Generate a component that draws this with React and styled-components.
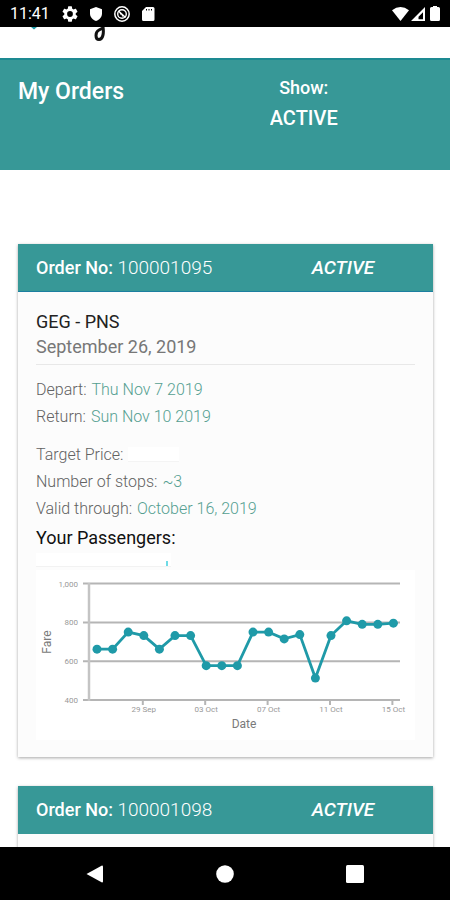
import React from "react";
import styled, { createGlobalStyle } from "styled-components";

const TEAL = "#379897";
const SERIES = "#1f9aa8";

const GlobalStyle = createGlobalStyle`
  *, *::before, *::after { box-sizing: border-box; }
  body {
    margin: 0;
    background: #fff;
    font-family: Roboto, "Liberation Sans", sans-serif;
  }
  h1, h2, h3, p, dl, dd, dt { margin: 0; font-weight: inherit; }
`;

const Screen = styled.div`
  display: flex;
  flex-direction: column;
  height: 100vh;
  overflow: hidden;
  background: #fff;
`;

const StatusBar = styled.div`
  flex: none;
  display: flex;
  align-items: center;
  justify-content: space-between;
  height: 27px;
  padding: 0 8px 0 10px;
  background: #000;
  color: #fff;
`;

const StatusGroup = styled.div`
  display: flex;
  align-items: center;
  gap: ${(p) => p.$gap};
`;

const Clock = styled.time`
  margin-right: 2px;
  font-size: 16px;
  line-height: 27px;
`;

const StatusIcon = styled.svg`
  display: block;
  width: ${(p) => p.$size || "16px"};
  height: 16px;
  fill: #fff;
`;

const Content = styled.main`
  flex: 1;
  min-height: 0;
  overflow: hidden;
`;

const BrandStrip = styled.div`
  height: 31px;
  padding-left: 30px;
`;

const BrandMark = styled.svg`
  display: block;
  width: 80px;
  height: 16px;
`;

const PageHeader = styled.header`
  display: grid;
  grid-template-columns: 35% 65%;
  height: 112px;
  padding-top: 17px;
  border-top: 2px solid #1d8a92;
  background: ${TEAL};
  color: #fff;
`;

const PageTitle = styled.h1`
  padding-left: 18px;
  font-size: 23px;
  font-weight: 500;
  line-height: 30px;
`;

const Filter = styled.label`
  display: flex;
  flex-direction: column;
  align-items: center;
  font-size: 18px;
  font-weight: 500;
  line-height: 22px;
`;

const FilterSelect = styled.select`
  appearance: none;
  margin-top: 6px;
  padding: 0;
  border: 0;
  background: transparent;
  color: #fff;
  font: 500 20px/26px Roboto, "Liberation Sans", sans-serif;
`;

const OrderList = styled.section`
  display: flex;
  flex-direction: column;
  gap: 29px;
  padding: 74px 17px 0 18px;
`;

const Card = styled.article`
  background: #fcfcfc;
  box-shadow: 0 1px 3px rgba(0, 0, 0, 0.35);
`;

const CardHeader = styled.header`
  display: grid;
  grid-template-columns: 62% 38%;
  align-items: center;
  height: 48px;
  padding: 0 18px;
  border-bottom: 1px solid ${(p) => (p.$open ? "#1c7fa0" : TEAL)};
  background: ${TEAL};
  color: #fff;
  line-height: 24px;
`;

const OrderNumber = styled.h2`
  font-size: 18px;
  font-weight: 500;
  white-space: nowrap;

  span {
    font-size: 19px;
    font-weight: 300;
  }
`;

const Status = styled.em`
  text-align: center;
  font-size: 19px;
  font-weight: 500;
`;

const CardBody = styled.div`
  min-height: 64px;
  padding: 17px 18px;
`;

const Route = styled.h3`
  color: #222;
  font-size: 18px;
  line-height: 25px;
`;

const OrderDate = styled.p`
  padding-bottom: 5px;
  border-bottom: 1px solid #e8e8e8;
  color: #777;
  font-size: 18px;
  font-weight: 400;
  line-height: 25px;
`;

const Details = styled.dl`
  margin-top: 11px;
  font-size: 16px;
  font-weight: 300;
  line-height: 27px;
`;

const Detail = styled.div`
  display: flex;
  align-items: center;
  gap: 5px;

  dt { color: #626262; }
  dd { color: #559f91; }
`;

const HiddenPrice = styled.dd`
  width: 51px;
  height: 15px;
  border-bottom: 1px solid #f4f4f4;
  background: #fff;
`;

const PassengersTitle = styled.h3`
  color: #111;
  font-size: 18px;
  line-height: 31px;
`;

const HiddenPassenger = styled.div`
  display: flex;
  align-items: flex-end;
  justify-content: flex-end;
  width: 135px;
  height: 14px;
  margin-bottom: 3px;
  padding-right: 3px;
  border-bottom: 1px solid #f2f2f2;
  background: #fff;

  &::after {
    content: "";
    width: 2px;
    height: 5px;
    background: #6fdbe6;
  }
`;

const ChartFrame = styled.svg`
  display: block;
  width: 100%;
  height: auto;
  background: #fff;
  font-family: Roboto, "Liberation Sans", sans-serif;
`;

const AxisLabel = styled.text`
  fill: #999;
  font-size: 8px;
  text-anchor: ${(p) => p.$anchor};
`;

const AxisTitle = styled.text`
  fill: #7a7a7a;
  font-size: 12px;
  text-anchor: middle;
`;

const NavBar = styled.nav`
  flex: none;
  display: grid;
  grid-template-columns: repeat(3, 130px);
  justify-content: center;
  height: 53px;
  background: #000;
`;

const NavButton = styled.button`
  display: flex;
  align-items: center;
  justify-content: center;
  padding: 0;
  border: 0;
  background: transparent;

  svg {
    width: 20px;
    height: 20px;
    fill: #fff;
  }
`;

const FARES = [662, 662, 750, 732, 662, 732, 732, 577, 577, 577, 750, 750, 715, 737, 513, 732, 808, 790, 790, 796];
const FARE_TICKS = [[1000, "1,000"], [800, "800"], [600, "600"], [400, "400"]];
const DATE_TICKS = [[3, "29 Sep"], [7, "03 Oct"], [11, "07 Oct"], [15, "11 Oct"], [19, "15 Oct"]];

const xAt = (i) => 61 + i * 15.6;
const yAt = (fare) => 130 - (fare - 400) * 0.194;

function FareChart() {
  const points = FARES.map((fare, i) => [xAt(i), yAt(fare)]);
  return (
    <ChartFrame viewBox="0 0 379 170" role="img" aria-label="Fare by date">
      {FARE_TICKS.map(([fare, label]) => (
        <g key={fare}>
          <line x1="47" x2="364" y1={yAt(fare)} y2={yAt(fare)} stroke="#b5b5b5" strokeWidth="2" />
          <AxisLabel $anchor="end" x="42" y={yAt(fare) + 3}>{label}</AxisLabel>
        </g>
      ))}
      <line x1="53" x2="53" y1="13" y2="131" stroke="#c4c4c4" strokeWidth="2.5" />
      {DATE_TICKS.map(([i, label]) => (
        <g key={label}>
          <line x1={xAt(i) - 1} x2={xAt(i) - 1} y1="130" y2="135" stroke="#b5b5b5" strokeWidth="2" />
          <AxisLabel $anchor="middle" x={xAt(i)} y="142">{label}</AxisLabel>
        </g>
      ))}
      <polyline points={points.map((p) => p.join(",")).join(" ")} fill="none" stroke={SERIES} strokeWidth="2.8" />
      {points.map(([x, y]) => (
        <circle key={x} cx={x} cy={y} r="4.5" fill={SERIES} />
      ))}
      <AxisTitle x="208" y="158">Date</AxisTitle>
      <AxisTitle transform="translate(15 72) rotate(-90)">Fare</AxisTitle>
    </ChartFrame>
  );
}

function OrderCard({ number, status, children }) {
  return (
    <Card>
      <CardHeader $open={Boolean(children)}>
        <OrderNumber>Order No: <span>{number}</span></OrderNumber>
        <Status>{status}</Status>
      </CardHeader>
      <CardBody>{children}</CardBody>
    </Card>
  );
}

export default function App() {
  return (
    <>
      <GlobalStyle />
      <Screen>
        <StatusBar>
          <StatusGroup $gap="10px">
            <Clock>11:41</Clock>
            <StatusIcon viewBox="2 2 20 20" aria-hidden="true">
              <path d="M19.14 12.94c.04-.3.06-.61.06-.94s-.02-.64-.07-.94l2.03-1.58a.49.49 0 0 0 .12-.61l-1.92-3.32a.49.49 0 0 0-.59-.22l-2.39.96a7 7 0 0 0-1.62-.94l-.36-2.54a.48.48 0 0 0-.48-.41h-3.84a.48.48 0 0 0-.47.41l-.36 2.54c-.59.24-1.13.57-1.62.94l-2.39-.96a.48.48 0 0 0-.59.22L2.74 8.87a.48.48 0 0 0 .12.61l2.03 1.58a6 6 0 0 0 0 1.88l-2.03 1.58a.49.49 0 0 0-.12.61l1.92 3.32c.12.22.37.29.59.22l2.39-.96c.5.38 1.03.7 1.62.94l.36 2.54c.05.24.24.41.48.41h3.84c.24 0 .44-.17.47-.41l.36-2.54a7 7 0 0 0 1.62-.94l2.39.96c.22.08.47 0 .59-.22l1.92-3.32a.48.48 0 0 0-.12-.61zM12 15.6A3.6 3.6 0 1 1 12 8.4a3.6 3.6 0 0 1 0 7.2z" />
            </StatusIcon>
            <StatusIcon viewBox="0 0 16 16" aria-hidden="true">
              <path d="M8 1l6 2.3v4.2c0 3.4-2.3 6.300-6 7.500-3.700-1.200-6-4.100-6-7.500V3.300z" />
            </StatusIcon>
            <StatusIcon viewBox="0 0 16 16" aria-hidden="true">
              <circle cx="8" cy="8" r="7.2" fill="none" stroke="#fff" strokeWidth="1.5" />
              <circle cx="8" cy="8" r="4.3" fill="none" stroke="#fff" strokeWidth="1.4" />
              <path d="M4.5 5l7 6.5M6 8q2-1 3 2.500" fill="none" stroke="#fff" strokeWidth="1.5" />
            </StatusIcon>
            <StatusIcon viewBox="0 0 16 16" aria-hidden="true">
              <path fillRule="evenodd" d="M6 1h7q1.500 0 1.500 1.500v11q0 1.500-1.500 1.500H3.500Q2 15 2 13.500V5zM6 3v1.500h1V3zM8.500 3v1.500h1V3zM11 3v1.500h1V3z" />
            </StatusIcon>
          </StatusGroup>
          <StatusGroup $gap="0px">
            <StatusIcon $size="19px" viewBox="0 0 19 16" aria-hidden="true">
              <path d="M1 4.200Q9.500-2.200 18 4.200L9.500 15z" />
            </StatusIcon>
            <StatusIcon $size="18px" viewBox="0 0 18 16" aria-hidden="true">
              <path fillRule="evenodd" d="M1 15L15 1v14zM8.500 13.300H13V6.200L8.500 10.700z" />
            </StatusIcon>
            <StatusIcon $size="14px" viewBox="0 0 14 16" aria-hidden="true">
              <path d="M5 0h4v1h1.500Q12 1 12 2.500v11q0 1.500-1.500 1.500h-7Q2 15 2 13.500v-11Q2 1 3.500 1H5z" />
            </StatusIcon>
          </StatusGroup>
        </StatusBar>

        <Content>
          <BrandStrip>
            <BrandMark viewBox="0 0 80 16" aria-hidden="true">
              <path d="M1 0h6L4 2.500z" fill={SERIES} />
              <path d="M73 0C74 6 73 12.500 69 12.500C65 12.500 65 5 69 3L73 1" fill="none" stroke="#111" strokeWidth="3" />
            </BrandMark>
          </BrandStrip>

          <PageHeader>
            <PageTitle>My Orders</PageTitle>
            <Filter>
              Show:
              <FilterSelect defaultValue="ACTIVE">
                <option>ACTIVE</option>
              </FilterSelect>
            </Filter>
          </PageHeader>

          <OrderList>
            <OrderCard number="100001095" status="ACTIVE">
              <Route>GEG - PNS</Route>
              <OrderDate>September 26, 2019</OrderDate>
              <Details>
                <Detail><dt>Depart:</dt><dd>Thu Nov 7 2019</dd></Detail>
                <Detail><dt>Return:</dt><dd>Sun Nov 10 2019</dd></Detail>
              </Details>
              <Details>
                <Detail><dt>Target Price:</dt><HiddenPrice /></Detail>
                <Detail><dt>Number of stops:</dt><dd>~3</dd></Detail>
                <Detail><dt>Valid through:</dt><dd>October 16, 2019</dd></Detail>
              </Details>
              <PassengersTitle>Your Passengers:</PassengersTitle>
              <HiddenPassenger />
              <FareChart />
            </OrderCard>
            <OrderCard number="100001098" status="ACTIVE" />
          </OrderList>
        </Content>

        <NavBar aria-label="System">
          <NavButton type="button" aria-label="Back">
            <svg viewBox="0 0 20 20"><path d="M1.500 10L17 1.500q1 0 1 1v15q0 1-1 1z" /></svg>
          </NavButton>
          <NavButton type="button" aria-label="Home">
            <svg viewBox="0 0 20 20"><circle cx="10" cy="10" r="8.8" /></svg>
          </NavButton>
          <NavButton type="button" aria-label="Recent apps">
            <svg viewBox="0 0 20 20"><rect x="1" y="1" width="18" height="18" rx="1.5" /></svg>
          </NavButton>
        </NavBar>
      </Screen>
    </>
  );
}
